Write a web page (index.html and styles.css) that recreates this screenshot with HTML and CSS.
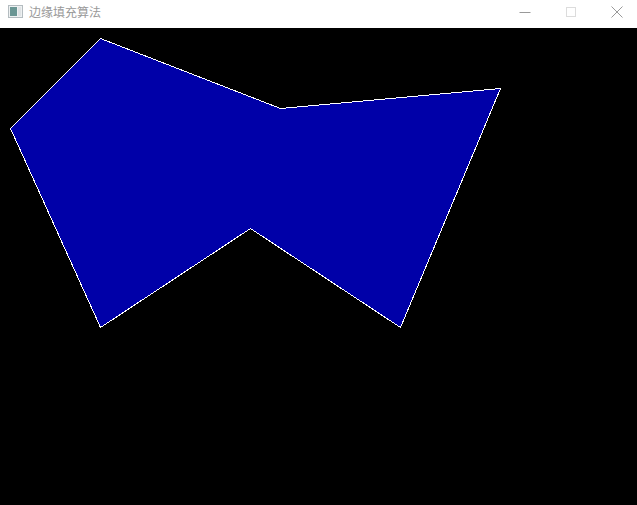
FILE: index.html
```html
<!DOCTYPE html>
<html lang="zh-CN">
<head>
  <meta charset="UTF-8">
  <meta name="viewport" content="width=device-width, initial-scale=1.0">
  <title>边缘填充算法</title>
  <link rel="stylesheet" href="styles.css">
</head>
<body>

  <div class="titlebar">
    <svg class="app-icon" width="15" height="13" viewBox="0 0 15 13">
      <rect x="0.5" y="0.5" width="14" height="12" fill="#eef1f2" stroke="#b4bcc0"/>
      <rect x="2" y="2" width="7" height="9" fill="#6a9694"/>
      <rect x="10" y="2" width="3" height="9" fill="#dfe3e5"/>
    </svg>
    <span class="title">边缘填充算法</span>
    <div class="controls">
      <div class="control">
        <svg width="12" height="12" viewBox="0 0 12 12"><path d="M0.5 6.5H11.5" stroke="#999"/></svg>
      </div>
      <div class="control">
        <svg width="12" height="12" viewBox="0 0 12 12"><rect x="1.5" y="1.5" width="9" height="9" fill="none" stroke="#dcdcdc"/></svg>
      </div>
      <div class="control">
        <svg width="12" height="12" viewBox="0 0 12 12"><path d="M0.5 0.5L11.5 11.5M11.5 0.5L0.5 11.5" stroke="#999"/></svg>
      </div>
    </div>
  </div>

  <svg class="canvas" width="637" height="477" viewBox="0 28 637 477">
    <polygon class="shape" points="100.5,38.5 280.5,108.5 500.5,88.5 400.5,327.5 250.5,228.5 100.5,327.5 10.5,128.5"/>
  </svg>

</body>
</html>
```

FILE: styles.css
```css
body {
  margin: 0;
  padding: 0;
  background-color: #000;
  overflow: hidden;
}
.titlebar {
  height: 28px;
  background-color: #fff;
  display: flex;
  align-items: flex-start;
  padding-left: 8px;
  font-family: "Liberation Sans", "Noto Sans CJK SC", sans-serif;
}
.app-icon {
  margin-top: 5px;
  margin-right: 6px;
}
.title {
  font-size: 12px;
  line-height: 26px;
  color: #999;
}
.controls {
  display: flex;
  margin-left: auto;
  margin-right: -3px;
}
.control {
  width: 46px;
  height: 24px;
  display: flex;
  align-items: center;
  justify-content: center;
}
.canvas {
  display: block;
}
.shape {
  fill: #0000a8;
  stroke: #fff;
  stroke-width: 1;
  shape-rendering: crispEdges;
}
```
